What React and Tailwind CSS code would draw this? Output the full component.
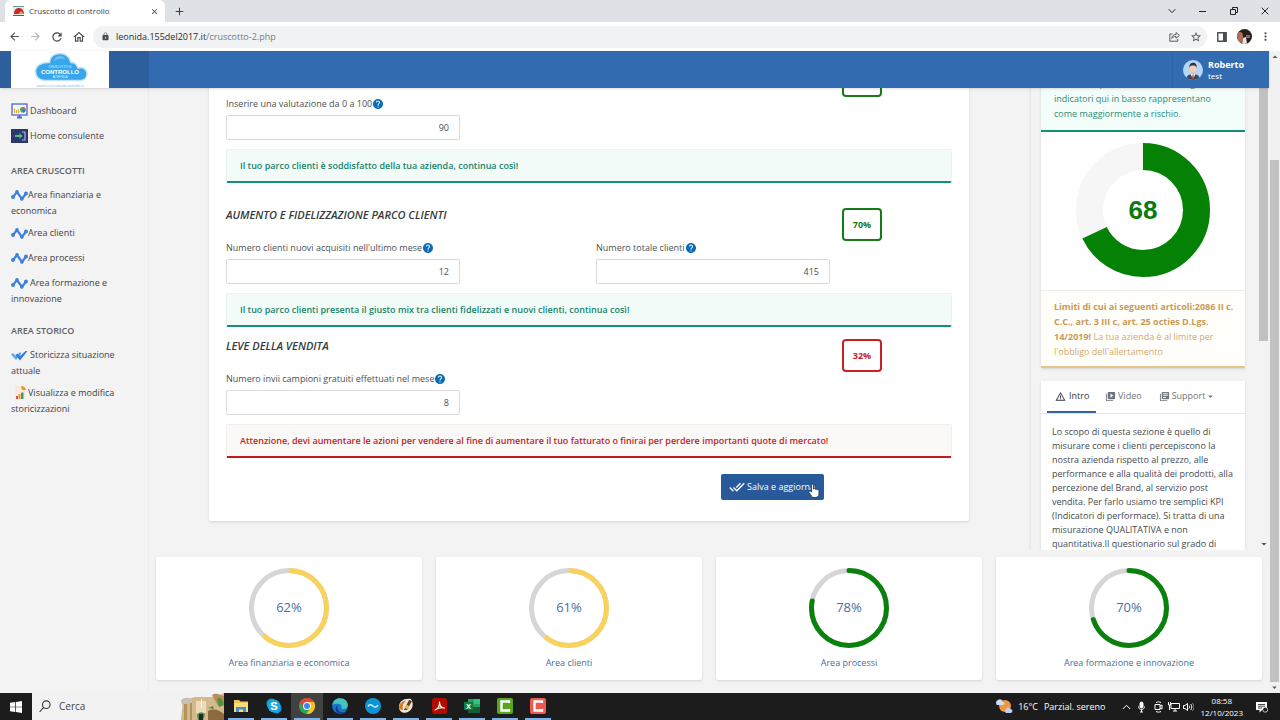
import React from "react";
import {
  MdArrowBack, MdArrowForward, MdRefresh, MdOutlineHome, MdLock, MdStarBorder, MdMoreVert,
  MdClose, MdAdd, MdDoneAll, MdHelp, MdWarningAmber, MdVideoLibrary, MdLibraryBooks, MdArrowDropDown, MdArrowDropUp,
} from "react-icons/md";

function Donut({ size, radius, width, value, color, track, round }) {
  const c = size / 2;
  return (
    <svg width={size} height={size} viewBox={`0 0 ${size} ${size}`} fill="none" strokeWidth={width} aria-hidden="true">
      <circle cx={c} cy={c} r={radius} stroke={track} />
      <circle
        cx={c} cy={c} r={radius} stroke={color} pathLength="100"
        strokeDasharray={`${value} 100`} strokeLinecap={round ? "round" : "butt"}
        transform={`rotate(-90 ${c} ${c})`}
      />
    </svg>
  );
}

/* ---------- browser chrome ---------- */

function TabStrip() {
  return (
    <div className="flex h-[22px] shrink-0 items-center bg-[#dee1e6] pl-[5px] text-[#3c4043]">
      <div className="flex h-full w-[160px] items-center rounded-t-md bg-white pr-[6px] pl-2">
        <svg width="11" height="10" viewBox="0 0 11 10" aria-hidden="true">
          <rect width="11" height="10" fill="#e9ede4" />
          <path d="M0 0h11v1H0z" fill="#57a39a" />
          <path d="M1 8c0-4 2-6 5-6s5 3 5 6z" fill="#cf2230" />
          <path d="M5.500 7.500 8 5l3 3z" fill="#e5b93a" />
          <path d="M0 9h11v1H0z" fill="#3a6d49" />
        </svg>
        <span className="ml-[5px] flex-1 text-[8px]">Cruscotto di controllo</span>
        <button aria-label="Chiudi scheda"><MdClose size={9} /></button>
      </div>
      <button aria-label="Nuova scheda" className="ml-2"><MdAdd size={13} /></button>
      <div className="ml-auto flex items-center text-[#222]">
        <button aria-label="Cerca schede" className="flex w-[31px] justify-center">
          <svg width="8" height="8" viewBox="0 0 8 8" fill="none" stroke="currentColor"><path d="M.7 2.200 4 5.600 7.300 2.200" /></svg>
        </button>
        <button aria-label="Riduci" className="flex w-[31px] justify-center">
          <svg width="7" height="8" viewBox="0 0 7 8" stroke="currentColor"><path d="M0 4.500h7" /></svg>
        </button>
        <button aria-label="Ripristina" className="flex w-[31px] justify-center">
          <svg width="8" height="8" viewBox="0 0 8 8" fill="none" stroke="currentColor"><path d="M.5 2.500h5v5h-5zM2.500 2.500v-2h5v5h-2" /></svg>
        </button>
        <button aria-label="Chiudi" className="flex w-[31px] justify-center">
          <svg width="8" height="8" viewBox="0 0 8 8" stroke="currentColor"><path d="m.7.7 6.600 6.600M7.300.7.7 7.300" /></svg>
        </button>
      </div>
    </div>
  );
}

function Toolbar() {
  return (
    <div className="flex h-[29px] shrink-0 items-center bg-white pr-2 pl-2 text-[#4a4d51]">
      <button aria-label="Indietro" className="w-[21px]"><MdArrowBack size={13} /></button>
      <button aria-label="Avanti" className="w-[21px] text-[#b3b5b8]"><MdArrowForward size={13} /></button>
      <button aria-label="Ricarica" className="w-[22px]"><MdRefresh size={14} /></button>
      <button aria-label="Pagina iniziale" className="w-[21px]"><MdOutlineHome size={14} /></button>
      <div className="flex h-[22px] flex-1 items-center rounded-full bg-[#f0f2f3] pr-[5px] pl-2">
        <MdLock size={9} />
        <span className="ml-[6px] flex-1 text-[9px] text-[#777b80]">
          <span className="text-[#2b2d30]">leonida.155del2017.it</span>/cruscotto-2.php
        </span>
        <button aria-label="Condividi" className="mr-[10px]">
          <svg width="11" height="11" viewBox="0 0 11 11" fill="none" stroke="currentColor" strokeWidth=".9">
            <path d="M3.500 3H.8v7.200h8V8M2.800 7.500c.3-2.700 1.800-4 4.200-4V1.500l3.400 3L7 7.300V5.400c-2 0-3.200.6-4.200 2.100z" />
          </svg>
        </button>
        <button aria-label="Aggiungi ai preferiti"><MdStarBorder size={12} /></button>
      </div>
      <button aria-label="Pannello laterale" className="ml-[10px]">
        <svg width="10" height="10" viewBox="0 0 10 10"><path d="M.8.8h8.400v8.400H.8z" fill="none" stroke="currentColor" strokeWidth="1.400" /><path d="M6 1h3v8H6z" fill="currentColor" /></svg>
      </button>
      <button aria-label="Profilo" className="ml-[10px]">
        <svg width="15" height="15" viewBox="0 0 15 15">
          <clipPath id="who"><circle cx="7.500" cy="7.500" r="7.500" /></clipPath>
          <g clipPath="url(#who)">
            <path d="M0 0h15v15H0z" fill="#2a1d1a" />
            <path d="M0 4c3-2 6-1 6 3s-1 5-2 8H0z" fill="#b0705a" />
            <path d="m6 9 3-1 1 7H5z" fill="#e9e3e0" />
            <path d="M9 6h4v3H9z" fill="#7b6f6c" />
          </g>
        </svg>
      </button>
      <button aria-label="Menu" className="ml-[7px]"><MdMoreVert size={13} /></button>
    </div>
  );
}

/* ---------- page header and sidebar ---------- */

function PageHeader() {
  return (
    <header className="z-10 flex h-[37px] shrink-0 bg-[#336bb0] shadow-sm">
      <div className="flex w-[149px] bg-[#2e5f9d] pl-[11px]">
        <a href="#home" aria-label="Cruscotto di controllo" className="flex w-[98px] justify-center bg-white">
          <svg width="60" height="37" viewBox="0 0 60 37">
            <path d="M15 29.500h35a6.500 6.500 0 0 0 1-13c-1.500 0-2 .2-3 .5C47 13.500 44 11 41 11.500 39 5 35 2.500 30 2.500c-6 0-10 3.500-10.500 9C11 11 5.500 15 5.500 20.500s4 9 9.500 9z" fill="#37a6ea" stroke="#c3e4f8" strokeWidth="1.500" />
            <path d="M24 11c0-4 3-6 6-6s5 2 5 3-3-1-6 0-4 1-5 3z" fill="#6dbdf0" />
            <text x="30" y="22.500" textAnchor="middle" fontSize="6" fontWeight="700" fill="#fff" fontFamily="Liberation Sans, sans-serif">CONTROLLO</text>
            <text x="30" y="16.500" textAnchor="middle" fontSize="3" fill="#d8effd" fontFamily="Liberation Sans, sans-serif">CRUSCOTTO DI</text>
            <text x="30" y="27" textAnchor="middle" fontSize="3.500" fill="#d8effd" fontFamily="Liberation Sans, sans-serif">AZIENDA</text>
            <text x="30" y="35.500" textAnchor="middle" fontSize="4" fill="#8fc4e6" fontFamily="Liberation Sans, sans-serif">www.cruscottodicontrollo.it</text>
          </svg>
        </a>
      </div>
      <div className="ml-auto flex w-[97px] items-center border-l border-[#2f64a6] pl-[10px] text-white">
        <svg width="20" height="20" viewBox="0 0 20 20" aria-hidden="true">
          <clipPath id="usr"><circle cx="10" cy="10" r="10" /></clipPath>
          <g clipPath="url(#usr)">
            <path d="M0 0h20v20H0z" fill="#b5d6fb" />
            <path d="M3 20c0-4 3-6 7-6s7 2 7 6z" fill="#3a4a5c" />
            <path d="m7.500 14 2.500-1 2.500 1-2.500 5z" fill="#fff" />
            <path d="m9.500 15h1l.6 4h-2.200z" fill="#b9413b" />
            <path d="M8.500 11h3v3L10 15.200 8.500 14z" fill="#e8b594" />
            <ellipse cx="10" cy="8.500" rx="3.300" ry="4" fill="#f6cdb0" />
            <path d="M6.500 8C6 4 8 2.700 10.500 2.700S14 5 13.500 8c-.5-2-1.500-2.500-3.500-2.500S7 6 6.500 8z" fill="#2f3440" />
          </g>
        </svg>
        <div className="ml-[5px] leading-[11px]">
          <div className="text-[9px] font-bold">Roberto</div>
          <div className="text-[8px]">test</div>
        </div>
      </div>
    </header>
  );
}

const DashIcon = () => (
  <svg width="17" height="16" viewBox="0 0 17 16">
    <rect x="1" y="1" width="15" height="11" fill="#f4f6ff" stroke="#5b6fd8" strokeWidth="1.400" />
    <path d="M6 14.500h5M8.500 12v3" stroke="#4d66d0" strokeWidth="1.800" />
    <path d="M3.500 5.500V10M5.500 7v3M7.500 6v4" stroke="#e6a93c" strokeWidth="1.100" />
    <circle cx="11.800" cy="6.800" r="2.800" fill="#3fae62" />
    <path d="M11.800 6.800V4a2.800 2.800 0 0 1 2.800 2.800z" fill="#e2574c" />
    <path d="M11.800 6.800h2.800a2.800 2.800 0 0 1-2.800 2.800z" fill="#3d6fd8" />
  </svg>
);
const HomeIcon = () => (
  <svg width="17" height="14" viewBox="0 0 17 14">
    <path d="M0 0h17v14H0z" fill="#2c3a6b" />
    <path d="M4 7h6" stroke="#4fc08a" strokeWidth="2" />
    <path d="m8.500 4 3 3-3 3z" fill="#4fc08a" />
    <path d="M11 3h3v8h-3" fill="none" stroke="#a9b8e8" strokeWidth="1.200" />
  </svg>
);
const TrendIcon = () => (
  <svg width="17" height="12" viewBox="0 0 17 12" fill="none" stroke="#3f80dc" strokeWidth="2.200">
    <path d="M2 8 6 3l5 7 4-5.500" />
    <g fill="#3f80dc" stroke="none"><circle cx="2" cy="8" r="2" /><circle cx="6" cy="2.800" r="1.800" /><circle cx="10.800" cy="10" r="1.800" /><circle cx="15" cy="4.500" r="2" /></g>
  </svg>
);
const ChecksIcon = () => (
  <svg width="17" height="11" viewBox="0 0 17 11">
    <path d="M0 4.500 2 3l3 3L9 2l1.500 1.500L5 10z" fill="#62a9ee" />
    <path d="M4.500 5 6.500 3.500 9 6l5.500-5L16.500 1 9 10.500z" fill="#2f7fdc" />
  </svg>
);
const ReportIcon = () => (
  <svg width="17" height="16" viewBox="0 0 17 16">
    <path d="M4 1h7l4 4v9H4z" fill="#fbeadb" />
    <path d="M10 1c3 0 5 2 5 4h-4z" fill="#f0962e" />
    <path d="M5 14v-3h2v3z" fill="#d9534a" /><path d="M7.500 14V9h2v5z" fill="#e6963c" /><path d="M10 14V7.500h2.500V14z" fill="#3c9d6a" />
  </svg>
);

function NavItem({ icon, children, spaced }) {
  return (
    <li className="min-h-[25px] py-[3px]">
      <a href="#area" className="block leading-[16px]">
        <span className={`inline-flex h-4 w-[17px] items-center align-top ${spaced ? "mr-[2px]" : ""}`} aria-hidden="true">{icon}</span>
        {children}
      </a>
    </li>
  );
}

function Sidebar() {
  return (
    <nav className="w-[149px] shrink-0 border-r border-[#ededee] pt-3 pr-8 pl-[11px] text-[9px] text-[#3d4247]">
      <ul>
        <NavItem icon={<DashIcon />} spaced>Dashboard</NavItem>
        <NavItem icon={<HomeIcon />} spaced>Home consulente</NavItem>
      </ul>
      <h2 className="mt-[13px] mb-[5px] leading-[16px] font-semibold text-[#5c6166]">AREA CRUSCOTTI</h2>
      <ul>
        <NavItem icon={<TrendIcon />}>Area finanziaria e economica</NavItem>
        <NavItem icon={<TrendIcon />}>Area clienti</NavItem>
        <NavItem icon={<TrendIcon />}>Area processi</NavItem>
        <NavItem icon={<TrendIcon />} spaced>Area formazione e innovazione</NavItem>
      </ul>
      <h2 className="mt-[13px] mb-[5px] leading-[16px] font-semibold text-[#5c6166]">AREA STORICO</h2>
      <ul>
        <NavItem icon={<ChecksIcon />} spaced>Storicizza situazione attuale</NavItem>
        <NavItem icon={<ReportIcon />}>Visualizza e modifica storicizzazioni</NavItem>
      </ul>
    </nav>
  );
}

/* ---------- questionnaire ---------- */

function Field({ id, label, value }) {
  return (
    <div>
      <div className="flex h-4 items-center">
        <label htmlFor={id} className="text-[9px] text-[#4b5056]">{label}</label>
        <MdHelp size={12} className="text-[#0b6cb5]" />
      </div>
      <input
        id={id} defaultValue={value}
        className="mt-[3px] block h-[25px] w-[234px] rounded-[2px] border border-[#d9dbdd] bg-white px-[10px] text-right text-[9px] text-[#4b5056]"
      />
    </div>
  );
}

function Notice({ bad, children }) {
  return (
    <p className={`mt-[9px] h-[34px] rounded-[2px] border border-b-2 px-[13px] text-[9px] leading-[31px] font-semibold ${bad ? "border-x-[#f3efef] border-t-[#f3efef] border-b-[#c01a20] bg-[#fbf8f8] text-[#c31f25]" : "border-x-[#eaf3f0] border-t-[#eaf3f0] border-b-[#11917a] bg-[#f3fbf9] text-[#17836b]"}`}>
      {children}
    </p>
  );
}

function Section({ title, score, bad, fields, notice, className }) {
  return (
    <section className={className}>
      <div className="flex h-8 items-start justify-between pr-[70px]">
        <h3 className="text-[11px] leading-[14px] font-semibold text-[#343a40] italic">{title}</h3>
        <span className={`flex h-[33px] w-10 items-center justify-center rounded-[4px] border-2 text-[9px] font-bold ${bad ? "border-[#c92026] text-[#c31f25]" : "border-[#167a1b] text-[#167a1b]"}`}>
          {score}
        </span>
      </div>
      <div className="grid grid-cols-2 gap-[14px]">
        {fields.map((f) => <Field key={f.id} {...f} />)}
      </div>
      <Notice bad={bad}>{notice}</Notice>
    </section>
  );
}

function Questionnaire() {
  return (
    <div className="min-w-0 flex-1 overflow-hidden px-[60px]">
      <div className="-mt-6 h-[457px] rounded-[2px] bg-white px-[17px] shadow-sm">
        <Section
          fields={[{ id: "valutazione", label: "Inserire una valutazione da 0 a 100", value: "90" }]}
          notice="Il tuo parco clienti è soddisfatto della tua azienda, continua così!"
        />
        <Section
          className="mt-[25px]" title="AUMENTO E FIDELIZZAZIONE PARCO CLIENTI" score="70%"
          fields={[
            { id: "nuovi", label: "Numero clienti nuovi acquisiti nell'ultimo mese", value: "12" },
            { id: "totale", label: "Numero totale clienti", value: "415" },
          ]}
          notice="Il tuo parco clienti presenta il giusto mix tra clienti fidelizzati e nuovi clienti, continua così!"
        />
        <Section
          className="mt-3" title="LEVE DELLA VENDITA" score="32%" bad
          fields={[{ id: "campioni", label: "Numero invii campioni gratuiti effettuati nel mese", value: "8" }]}
          notice="Attenzione, devi aumentare le azioni per vendere al fine di aumentare il tuo fatturato o finirai per perdere importanti quote di mercato!"
        />
        <div className="mt-4 flex justify-end pr-[128px]">
          <button className="relative flex h-[26px] w-[103px] items-center rounded-[2px] bg-[#285a9b] pl-2 text-[9px] text-white">
            <MdDoneAll size={16} className="mr-[2px] shrink-0" />
            <span className="whitespace-nowrap">Salva e aggiorna</span>
            <svg className="absolute top-[9px] left-[87px]" width="12" height="15" viewBox="0 0 12 15" aria-hidden="true">
              <path d="M3.500 9V2c0-1.500 2-1.500 2 0v4c.5-.7 1.700-.5 1.900.3.600-.5 1.600-.2 1.800.5.900-.4 1.800.2 1.800 1.200v3c0 2-1.500 3.500-3.500 3.500H6c-1 0-2-.5-2.600-1.500L1 9.500C.5 8.300 2 7.500 2.800 8.400z" fill="#fff" stroke="#1d2430" strokeWidth=".8" />
            </svg>
          </button>
        </div>
      </div>
    </div>
  );
}

/* ---------- right column ---------- */

function RightColumn() {
  return (
    <aside className="flex w-[240px] shrink-0 overflow-hidden border-l-2 border-[#e9eaeb] pl-[10px]">
      <div className="w-[204px] shrink-0">
        <div className="-mt-3 bg-white shadow-sm">
          <p className="h-[56px] border-b-2 border-[#11917a] bg-[#f3fdfa] pr-5 pl-[13px] text-[9px] leading-[15px] text-[#2c8c76]">
            Controlla i parametri aziendali e gli indicatori qui in basso rappresentano come maggiormente a rischio.
          </p>
          <div className="grid h-[158px] place-items-center content-start pt-[11px]">
            <div className="col-start-1 row-start-1">
              <Donut size={134} radius={53.5} width={27} value={68} color="#058205" track="#f6f6f6" />
            </div>
            <span className="col-start-1 row-start-1 font-['Liberation_Sans',sans-serif] text-[26px] font-bold text-[#0a7a0f]">68</span>
          </div>
          <p className="border-t border-b-2 border-t-[#f3efe6] border-b-[#e8c486] bg-[#fffefa] pt-2 pr-2 pb-[7px] pl-[13px] text-[9px] leading-[15px] text-[#d3ab6c]">
            <b className="text-[#c99a55]">Limiti di cui ai seguenti articoli:2086 II c. C.C., art. 3 III c, art. 25 octies D.Lgs. 14/2019!</b> La tua azienda è al limite per l'obbligo dell'allertamento
          </p>
        </div>
        <div className="mt-[13px] bg-white shadow-sm">
          <div role="tablist" className="flex h-[33px] border-b border-[#e6e7e8] px-[6px] text-[9px] text-[#6f757b]">
            <button role="tab" aria-selected="true" className="flex h-8 w-[49px] items-center border-b-2 border-[#2f64a6] pl-2 text-[#343a40]"><MdWarningAmber size={11} className="mr-[3px]" />Intro</button>
            <button role="tab" aria-selected="false" className="flex h-[30px] items-center pl-[9px]"><MdVideoLibrary size={11} className="mr-[2px]" />Video</button>
            <button role="tab" aria-selected="false" className="flex h-[30px] items-center pl-[17px]"><MdLibraryBooks size={11} className="mr-[2px]" />Support<MdArrowDropDown size={11} /></button>
          </div>
          <p className="pt-[11px] pr-2 pl-[11px] text-[9px] leading-[14px] text-[#454a50]">
            Lo scopo di questa sezione è quello di misurare come i clienti percepiscono la nostra azienda rispetto al prezzo, alle performance e alla qualità dei prodotti, alla percezione del Brand, al servizio post vendita. Per farlo usiamo tre semplici KPI (Indicatori di performace). Si tratta di una misurazione QUALITATIVA e non quantitativa.Il questionario sul grado di
          </p>
        </div>
      </div>
      <div className="ml-auto flex w-[11px] flex-col items-center text-[#4b4b4b]">
        <div className="h-[253px] w-[9px] shrink-0 bg-[#c1c1c1]" />
        <MdArrowDropDown size={12} className="mt-auto" />
      </div>
    </aside>
  );
}

const AREAS = [
  { name: "Area finanziaria e economica", value: 62, color: "#f8d25c" },
  { name: "Area clienti", value: 61, color: "#f8d25c" },
  { name: "Area processi", value: 78, color: "#0a800d", round: true },
  { name: "Area formazione e innovazione", value: 70, color: "#0a800d", round: true },
];

function AreaCards() {
  return (
    <div className="mb-[13px] grid grid-cols-4 gap-[14px] px-[7px] pt-[7px]">
      {AREAS.map((a) => (
        <a key={a.name} href="#area" className="flex h-[123px] flex-col items-center rounded-[2px] bg-white pt-[11px] text-[#466f9f] shadow-sm">
          <div className="grid place-items-center">
            <div className="col-start-1 row-start-1"><Donut size={80} radius={37.5} width={5} value={a.value} color={a.color} track="#d6d6d6" round={a.round} /></div>
            <span className="col-start-1 row-start-1 text-[13px]">{a.value}%</span>
          </div>
          <span className="mt-2 text-[9px] leading-[14px]">{a.name}</span>
        </a>
      ))}
    </div>
  );
}

/* ---------- Windows taskbar ---------- */

const APPS = [
  ["Esplora file", <svg width="16" height="16" viewBox="0 0 16 16"><path d="M1 2h5l1.500 1.500H15V14H1z" fill="#f5c64f" /><path d="M1 5h14v9H1z" fill="#fbdc7c" /><path d="M3 14V9h10v5h-3v-2.500H6V14z" fill="#3f8fd2" /></svg>],
  ["Skype", <svg width="16" height="16" viewBox="0 0 16 16"><circle cx="5.500" cy="5.500" r="5" fill="#0f9ad8" /><circle cx="10.500" cy="10.500" r="5" fill="#0f9ad8" /><circle cx="8" cy="8" r="6.500" fill="#1ba8e6" /><text x="8" y="12" textAnchor="middle" fontSize="11" fontWeight="700" fill="#fff" fontFamily="Liberation Sans, sans-serif">S</text></svg>],
  ["Chrome", <svg width="16" height="16" viewBox="0 0 16 16"><circle cx="8" cy="8" r="8" fill="#2da94f" /><path d="M8 0a8 8 0 0 1 7 4H8L4.500 10 1.100 4A8 8 0 0 1 8 0z" fill="#ea4335" /><path d="M15 4a8 8 0 0 1-7.500 12L11.500 10 8 4z" fill="#fbc116" /><circle cx="8" cy="8" r="3.900" fill="#fff" /><circle cx="8" cy="8" r="3" fill="#4285f4" /></svg>],
  ["Edge", <svg width="16" height="16" viewBox="0 0 16 16"><circle cx="8" cy="8" r="7.800" fill="#1777cf" /><path d="M.3 7C1 2.500 4 .2 8 .2c5 0 7.800 3.300 7.800 6.800 0 2.500-2 4-4.300 4-1.500 0-2.500-.6-2-1.500.6-1.300-.3-3.500-3-3.800C4 5.500 1.500 5.800.3 7z" fill="#43c6c0" /><path d="M6 7c-1.500 2.500 0 6.500 4 7.200 2 .3 3.500-.3 4.700-1.500C13 15.500 10.500 16 8 15.800 3 15.500 2 9 6 7z" fill="#123f8f" /></svg>],
  ["OpenOffice", <svg width="16" height="16" viewBox="0 0 16 16"><circle cx="8" cy="8" r="8" fill="#0b94d6" /><path d="M3 8.500c1.500-2.500 3-2 5-.5s3.500 1.500 5-.8" fill="none" stroke="#d9f1fc" strokeWidth="1.400" /></svg>],
  ["Disegno", <svg width="16" height="16" viewBox="0 0 16 16"><path d="M1 9C1 3 6 0 13 1c3 5 2 10-3 13-4 2-9 0-9-5z" fill="#efe6da" /><path d="M1 9C2 4 5 3 8 3c-3 2-4 5-3 9-2 0-4-1-4-3z" fill="#d8792c" /><path d="m6 12 5-10 3 1-5 9z" fill="#5b3a22" /><circle cx="9" cy="9" r="2" fill="#f2b04c" /></svg>],
  ["Acrobat", <svg width="15" height="16" viewBox="0 0 15 16"><rect width="15" height="16" rx="2.500" fill="#b30b00" /><path d="M3 12c3-1 5-4.500 4.500-8 0 4 1.500 6 5 6-4-.8-7 .2-9.500 2z" fill="none" stroke="#fff" strokeWidth="1.200" strokeLinejoin="round" /></svg>],
  ["Excel", <svg width="16" height="16" viewBox="0 0 16 16"><path d="M4 1h12v14H4z" fill="#21a366" /><path d="M10 1h6v5h-6z" fill="#33c481" /><path d="M4 9h12v6H4z" fill="#185c37" /><path d="M0 4h9v8H0z" fill="#107c41" /><text x="4.500" y="10.700" textAnchor="middle" fontSize="7.500" fontWeight="700" fill="#fff" fontFamily="Liberation Sans, sans-serif">X</text></svg>],
  ["Camtasia", <svg width="16" height="16" viewBox="0 0 16 16"><rect width="16" height="16" rx="2" fill="#59a51b" /><path d="M12 5V3.500H4.500v9H12V11" fill="none" stroke="#fff" strokeWidth="2.400" /></svg>],
  ["Camtasia Recorder", <svg width="16" height="16" viewBox="0 0 16 16"><rect width="16" height="16" rx="2" fill="#ee5a4f" /><path d="M12 5V3.500H4.500v9H12V11" fill="none" stroke="#fff" strokeWidth="2.400" /></svg>],
];

function Taskbar() {
  return (
    <footer className="flex h-[27px] shrink-0 bg-[#1c1c1d] text-white">
      <button aria-label="Start" className="flex w-8 items-center justify-center">
        <svg width="12" height="12" viewBox="0 0 12 12" fill="#fff"><path d="M0 1.700 5.300 1v4.700H0zM6 .9 12 0v5.700H6zM0 6.300h5.300V11L0 10.300zM6 6.300h6V12l-6-.9z" /></svg>
      </button>
      <label className="flex w-[192px] items-center bg-[#f2f2f2] pl-[7px] text-[#333]">
        <svg width="12" height="13" viewBox="0 0 12 13" fill="none" stroke="#333" strokeWidth="1.100"><circle cx="7.300" cy="4.700" r="3.800" /><path d="M4.600 7.400.6 12" /></svg>
        <input aria-label="Cerca" placeholder="Cerca" className="ml-2 w-0 flex-1 bg-transparent text-[10px] placeholder:text-[#444]" />
        <svg width="43" height="27" viewBox="0 0 43 27" aria-hidden="true">
          <path d="M2 7 14 4h20l9-4v27H0z" fill="#d3b98c" />
          <path d="M0 8c1-4 7-4 11-2l-1 4-9 2z" fill="#c9c0b4" />
          <path d="M15 8h10v12H15z" fill="#eadcb8" /><path d="M20 6h1v9h-1z" fill="#f8f4e6" />
          <path d="M31 2c4-3 8 0 12 1v7l-6 3z" fill="#b98d5c" />
          <path d="M36 6c4-3 6 1 7 6l-5 2zM27 15l5-2 1 3zM16 22c3-4 7-3 8 0l-2 5h-5z" fill="#54913b" />
          <path d="M27 18c6-3 11-1 16 3v6H27z" fill="#8d6a3d" /><path d="M3 11h3v16H3zM9 10h2v17H9z" fill="#b2925f" />
          <path d="M18 21h4v6h-4z" fill="#1e2b2c" />
        </svg>
      </label>
      <ul className="ml-[1px] flex gap-[1px]">
        {APPS.map(([name, icon]) => (
          <li key={name} className={`flex w-8 ${name === "Chrome" ? "bg-[#414142]" : ""}`}>
            <button aria-label={name} className="mx-[3px] flex flex-1 items-center justify-center border-b-2 border-[#7db3e8]">{icon}</button>
          </li>
        ))}
      </ul>
      <div className="ml-auto flex items-center pr-3 text-[9px]">
        <svg width="17" height="17" viewBox="0 0 17 17" aria-hidden="true">
          <circle cx="9" cy="8" r="6" fill="#f0973c" /><path d="M1 7a3 3 0 0 1 1-5c2-2 5 0 5 2 2 0 2 3 0 3z" fill="#cfdcf4" /><path d="M10 15a2.500 2.500 0 0 1 0-4c1-2 4-1.500 4.500 0 2.500 0 2.500 4 0 4z" fill="#bcd0f2" />
        </svg>
        <span className="ml-[5px]">16°C</span>
        <span className="ml-[6px]">Parzial. sereno</span>
        <svg className="ml-4" width="9" height="8" viewBox="0 0 9 8" fill="none" stroke="#fff"><path d="m.8 6 3.700-3.700L8.200 6" /></svg>
        <svg className="ml-[6px]" width="9" height="12" viewBox="0 0 9 12" fill="none" stroke="#fff"><rect x="3" y="1" width="3" height="6" rx="1.500" fill="#fff" /><path d="M1.500 5.500c0 4 6 4 6 0M4.500 8.500V11M3 11h3" /></svg>
        <svg className="ml-[8px]" width="9" height="12" viewBox="0 0 9 12" fill="none" stroke="#fff"><path d="M1 3.500h5v5H1zM6 5l2-1v4L6 7M2 1.500c1.500-.8 3.500-.8 5 0M2 10.500c1.500.8 3.500.8 5 0" /></svg>
        <svg className="ml-[5px]" width="12" height="11" viewBox="0 0 12 11" fill="none" stroke="#fff"><path d="M3 2.500h8.500v5H3zM5 10h4M7 7.500V10M.5 1v3h2M2.500 1v3M1.500 4v5" /></svg>
        <svg className="ml-[3px]" width="11" height="10" viewBox="0 0 11 10" fill="none" stroke="#fff"><path d="M.5 3.500h1.500l2.500-2v7L2 6.500H.5zM6 3.500c.8 1 .8 2 0 3M7.700 2c1.500 2 1.500 4 0 6" /><path d="M9.400 1c2 3 2 5.500 0 8" opacity=".45" /></svg>
        <div className="ml-[7px] text-center text-[8px] leading-[12px]"><div>08:58</div><div>12/10/2023</div></div>
        <svg className="ml-[12px]" width="13" height="12" viewBox="0 0 13 12" aria-hidden="true"><path d="M1 1h11v8H7l-2.500 2.500V9H1z" fill="#fff" /><path d="M3 3.500h7M3 5.200h7M3 7h4" stroke="#1c1c1d" strokeWidth=".8" /><circle cx="10.200" cy="8.700" r="2.500" fill="#1c1c1d" stroke="#fff" strokeWidth=".7" /></svg>
      </div>
    </footer>
  );
}

export default function App() {
  return (
    <div className="flex h-screen w-full flex-col overflow-hidden font-['Open_Sans','Noto_Sans',sans-serif]">
      <TabStrip />
      <Toolbar />
      <div className="flex min-h-0 flex-1 bg-[#f3f3f4]">
        <div className="flex min-w-0 flex-1 flex-col">
          <PageHeader />
          <div className="flex min-h-0 flex-1">
            <Sidebar />
            <main className="flex min-w-0 flex-1 flex-col">
              <div className="flex min-h-0 flex-1">
                <Questionnaire />
                <RightColumn />
              </div>
              <AreaCards />
            </main>
          </div>
        </div>
        <div className="flex w-[11px] shrink-0 flex-col items-center bg-[#f1f1f1] text-[#5a5a5a]">
          <MdArrowDropUp size={12} />
          <div className="mt-[97px] w-[9px] flex-1 bg-[#c1c1c1]" />
          <MdArrowDropDown size={11} />
        </div>
      </div>
      <Taskbar />
    </div>
  );
}
